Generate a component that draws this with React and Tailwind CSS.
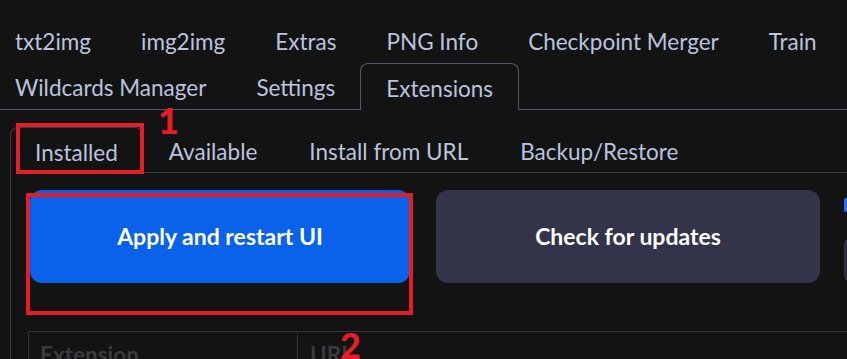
const topRow = ["txt2img", "img2img", "Extras", "PNG Info", "Checkpoint Merger", "Train"];
const subTabs = ["Available", "Install from URL", "Backup/Restore"];

function Tab({ label, active }) {
  if (active) {
    return (
      <div className="flex h-full items-center rounded-t-[8px] border border-b-0 border-[#55566a] px-[25px] pt-[4px]">
        {label}
      </div>
    );
  }
  return <div className="flex h-full items-center border-b border-[#55566a] px-[25px] pt-[4px]">{label}</div>;
}

export default function App() {
  return (
    <div className="relative h-[359px] w-[847px] overflow-hidden bg-[#131313] font-['Lato',sans-serif] text-[22.5px] text-[#bac4de]">
      {/* main tabs */}
      <div className="-ml-[10px] pt-[17px]">
        <div className="flex h-[46px] items-center pt-[4px]">
          {topRow.map((t) => (
            <div key={t} className="px-[25px]">
              {t}
            </div>
          ))}
        </div>
        <div className="flex h-[47px]">
          <Tab label="Wildcards Manager" />
          <Tab label="Settings" />
          <Tab label="Extensions" active />
          <div className="flex-1 border-b border-[#55566a]" />
        </div>
      </div>

      {/* extensions panel */}
      <div className="ml-[10px] mt-[17px] rounded-tl-[8px] border-l border-[#3a3a44]">
        <div className="flex h-[46px]">
          <div className="-ml-px flex h-full items-center rounded-t-[8px] border border-b-0 border-[#3a3a44] px-[24px] pt-[4px]">
            Installed
          </div>
          {subTabs.map((t) => (
            <div key={t} className="flex h-full items-center border-b border-[#3a3a44] px-[26px] pt-[4px]">
              {t}
            </div>
          ))}
          <div className="flex-1 border-b border-[#3a3a44]" />
        </div>

        <div className="flex gap-[26px] pl-[19px] pt-[17px]">
          <button className="flex h-[93px] w-[380px] shrink-0 items-center justify-center rounded-[12px] bg-[#0b62ea] text-[23px] font-bold text-white">
            Apply and restart UI
          </button>
          <button className="flex h-[93px] w-[384px] shrink-0 items-center justify-center rounded-[12px] bg-[#33334a] text-[23px] font-bold text-white">
            Check for updates
          </button>
          <div className="ml-[-2px] flex shrink-0 flex-col gap-[25px] pt-[8px]">
            <div className="h-[14px] w-[14px] rounded-[2px] bg-[#2f6ef0]" />
            <div className="h-[46px] w-[40px] rounded-[8px] border border-[#3b3b4c] bg-[#2a2a38]" />
          </div>
        </div>

        <div className="ml-[17px] mt-[48px] flex h-[60px] border-l border-t border-[#333339]">
          <div className="w-[269px] border-r border-[#333339] pl-[11px] pt-[6px] font-bold text-[#3b3b3f]">
            Extension
          </div>
          <div className="pl-[12px] pt-[6px] font-bold text-[#3b3b3f]">URL</div>
        </div>
      </div>

      {/* annotations */}
      <div className="absolute left-[16px] top-[123px] h-[51px] w-[128px] border-[4px] border-[#e41e26]" />
      <div className="absolute left-[158px] top-[102px] text-[36px] font-black leading-none text-[#e41e26]">1</div>
      <div className="absolute left-[26px] top-[193px] h-[122px] w-[387px] border-[4px] border-[#e41e26]" />
      <div className="absolute left-[340px] top-[327px] text-[36px] font-black leading-none text-[#e41e26]">2</div>
    </div>
  );
}
